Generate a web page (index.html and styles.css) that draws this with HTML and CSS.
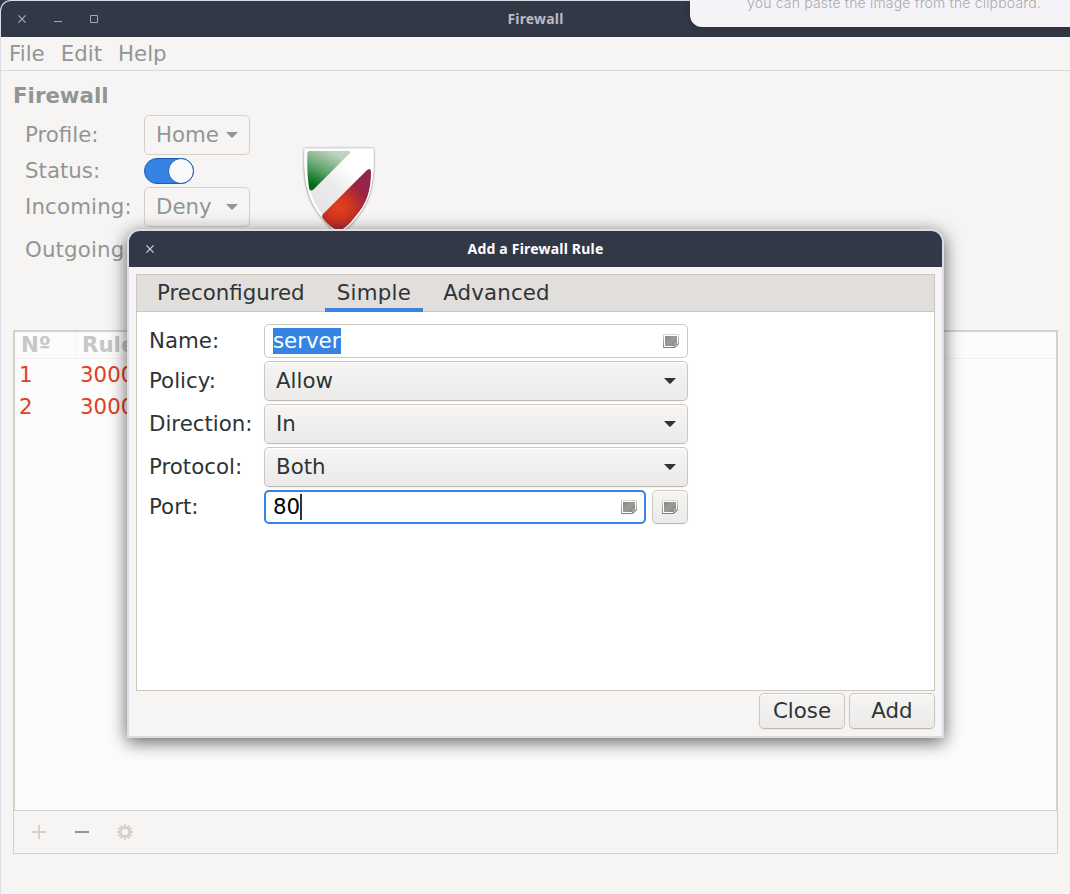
FILE: index.html
```html
<!DOCTYPE html>
<html lang="en">
<head>
<meta charset="utf-8">
<title>Firewall</title>
<link rel="stylesheet" href="styles.css">
</head>
<body>
<svg class="defs" width="0" height="0" aria-hidden="true">
  <defs>
    <linearGradient id="note" x1="0" y1="0" x2="1" y2="1"><stop offset="0" stop-color="#858883"/><stop offset=".5" stop-color="#999c97"/><stop offset="1" stop-color="#80837e"/></linearGradient>
    <linearGradient id="rim" x1="0" y1="0" x2="0" y2="1"><stop offset="0" stop-color="#d5d6d4"/><stop offset="1" stop-color="#7c7f7a"/></linearGradient>
    <symbol id="picture" viewBox="0 0 16 14">
      <path d="M.5.5h15v9.500l-3.500 3.500H.5z" fill="#fff" stroke="url(#rim)"/>
      <path d="M2 2h12v7.500h-3v2.500H2z" fill="url(#note)"/>
      <path d="M11.500 13V9.500l1.300.8 2.200-.300-3 3z" fill="#c8cac6" stroke="#7f827d" stroke-width=".8"/>
    </symbol>
    <symbol id="arrow" viewBox="0 0 12 6"><path d="M0 0h12L6.700 5.500q-.7.600-1.400 0z" fill="currentColor"/></symbol>
    <symbol id="cross" viewBox="0 0 8 8"><path d="M.4.400l7.200 7.200M7.600.400L.4 7.600" stroke="currentColor" stroke-width="1.200"/></symbol>
  </defs>
</svg>
<div class="window">
  <header class="titlebar">
    <div class="controls">
      <svg width="8" height="8"><use href="#cross"/></svg>
      <svg width="8" height="8"><path d="M0 6.500h8" stroke="currentColor"/></svg>
      <svg width="8" height="8"><path d="M.5.5h7v7h-7z" fill="none" stroke="currentColor"/></svg>
    </div>
    <span>Firewall</span>
  </header>
  <nav class="menubar"><span>File</span><span>Edit</span><span>Help</span></nav>
  <main class="content">
    <h1 class="heading">Firewall</h1>
    <section class="overview">
      <div class="form">
        <span>Profile:</span><div class="select muted"><span>Home</span><svg width="12" height="6"><use href="#arrow"/></svg></div>
        <span>Status:</span><div class="switch"><i></i></div>
        <span class="wide">Incoming:</span><div class="select muted"><span>Deny</span><svg width="12" height="6"><use href="#arrow"/></svg></div>
        <span class="wide">Outgoing:</span><div class="select muted"><span>Allow</span><svg width="12" height="6"><use href="#arrow"/></svg></div>
      </div>
      <svg class="shield" width="76" height="92" viewBox="0 0 76 92">
        <defs>
          <linearGradient id="silver" gradientUnits="userSpaceOnUse" x1="10" y1="70" x2="66" y2="8"><stop offset="0" stop-color="#e2e2e2"/><stop offset=".45" stop-color="#ebebeb"/><stop offset=".75" stop-color="#fff"/></linearGradient>
          <linearGradient id="green" gradientUnits="userSpaceOnUse" x1="28" y1="4" x2="9" y2="44"><stop offset="0" stop-color="#bdd2c0"/><stop offset=".45" stop-color="#5fa56b"/><stop offset=".85" stop-color="#006c16"/></linearGradient>
          <radialGradient id="red" gradientUnits="userSpaceOnUse" cx="38" cy="61" r="36"><stop offset="0" stop-color="#e5401c"/><stop offset=".35" stop-color="#cf361f"/><stop offset=".75" stop-color="#9c2441"/><stop offset="1" stop-color="#93244b"/></radialGradient>
        </defs>
        <path class="plate" d="M3.500 1.500h69c1 30-1 50-16.500 69Q47.500 82 38 87.500 29 82 21 71C4 51 2 29 3.500 1.500z" fill="url(#silver)"/>
        <path d="M4.500 2.500h67c1 28-1.500 48-16.500 67Q46.500 80 38 86 30 80 22 70C6 51 3.600 29 4.500 2.500z" fill="none" stroke="#fff" stroke-width="2"/>
        <path d="M9 4H46.500q4.500 0 2 2.600L13 42q-4 3.500-5-1-2.200-16-1.600-34Q6.500 4 9 4z" fill="url(#green)"/>
        <path d="M70 24.500C70 44 65.500 57 54 70Q46.500 80 38 84 28 80 22 71.500q-2-2.500.3-4.800L65 24q4.500-4 5 .5z" fill="url(#red)"/>
      </svg>
    </section>
    <section class="rules">
      <div class="table">
        <div class="row head"><b>Nº</b><b>Rule</b></div>
        <div class="row"><span>1</span><span>3000</span></div>
        <div class="row"><span>2</span><span>3000</span></div>
      </div>
      <div class="toolbar">
        <svg width="14" height="14"><path d="M7 0v14M0 7h14" stroke="#d5d0cc" stroke-width="2"/></svg>
        <svg width="14" height="14"><path d="M0 7h14" stroke="#929595" stroke-width="2"/></svg>
        <svg class="gear" width="16" height="16" viewBox="-8 -8 16 16" fill="none" stroke="#d5d0cc"><circle r="4.600" stroke-width="3"/><path d="M0-8v3M0 8V5M-8 0h3M8 0H5M-4.700-6.500l1.500 2M4.700-6.500l-1.500 2M-4.700 6.500l1.500-2M4.700 6.500l-1.500-2M-6.800-4l2 1.200M6.800-4l-2 1.200M-6.800 4l2-1.200M6.800 4l-2-1.200" stroke-width="1.800"/></svg>
      </div>
    </section>
  </main>
</div>

<aside class="notice">you can paste the image from the clipboard.</aside>

<div class="dialog" role="dialog">
  <header class="titlebar">
    <div class="controls"><svg width="8" height="8"><use href="#cross"/></svg></div>
    <span>Add a Firewall Rule</span>
  </header>
  <div class="notebook">
    <div class="tabs"><span>Preconfigured</span><span class="active">Simple</span><span class="last">Advanced</span></div>
    <div class="form">
      <span>Name:</span><div class="entry"><mark>server</mark><svg width="16" height="14"><use href="#picture"/></svg></div>
      <span>Policy:</span><div class="select"><span>Allow</span><svg width="12" height="6"><use href="#arrow"/></svg></div>
      <span>Direction:</span><div class="select"><span>In</span><svg width="12" height="6"><use href="#arrow"/></svg></div>
      <span>Protocol:</span><div class="select"><span>Both</span><svg width="12" height="6"><use href="#arrow"/></svg></div>
      <span>Port:</span>
      <div class="port">
        <div class="entry focus"><span class="typed">80</span><svg width="16" height="14"><use href="#picture"/></svg></div>
        <div class="button square"><svg width="16" height="14"><use href="#picture"/></svg></div>
      </div>
    </div>
  </div>
  <footer class="actions"><div class="button">Close</div><div class="button">Add</div></footer>
</div>
</body>
</html>
```
FILE: styles.css
```css
* { box-sizing: border-box; }
body {
  margin: 0;
  position: relative;
  width: 1070px;
  height: 894px;
  overflow: hidden;
  background: #323846;
  font: 21.33px/26px "DejaVu Sans", sans-serif;
  color: #929595;
}
svg { display: block; flex: none; }
.defs { position: absolute; }

.window {
  height: 894px;
  border: solid #dadde6;
  border-width: 1px 0 0 1px;
  border-radius: 11px 0 0 0;
  background: #f6f5f3;
  overflow: hidden;
}
.titlebar {
  display: grid;
  grid-template-columns: 1fr auto 1fr;
  align-items: center;
  height: 36px;
  background: #323846;
  color: #b9bcc2;
  font: bold 14px/20px "Noto Sans", sans-serif;
  letter-spacing: .2px;
}
.controls { display: flex; gap: 28px; padding-left: 17px; color: #a4a8b0; }
.menubar {
  display: flex;
  gap: 16px;
  height: 34px;
  padding: 4px 8px 0;
  border-bottom: 1px solid #dcdad8;
}
.content { padding: 12px; }
.heading { margin: 0 0 6px; font-size: 21.33px; line-height: 26px; }
.overview { display: flex; height: 215px; }
.form { display: grid; row-gap: 3px; align-content: start; align-items: center; }
.overview .form { grid-template-columns: 107px 106px; column-gap: 12px; padding-left: 12px; }
.wide { letter-spacing: .15px; }
.shield { margin: 32px 0 0 51px; overflow: visible; }
.plate { filter: drop-shadow(0 .5px 1.2px #00000090); }

.select {
  display: flex;
  align-items: center;
  justify-content: space-between;
  height: 40px;
  padding: 0 11px;
  border: 1px solid #cdc7c2;
  border-bottom-color: #bfb8b1;
  border-radius: 5px;
  background: linear-gradient(#f6f5f4, #ebeae8);
  box-shadow: inset 0 1px #fff, 0 1px 2px #0000000d;
}
.select.muted { border-color: #d4d0cc; background: none; box-shadow: none; }
.switch {
  width: 50px;
  height: 26px;
  border: 1px solid #185fb4;
  border-radius: 13px;
  background: #3584e4;
  display: flex;
  justify-content: flex-end;
}
.switch i {
  width: 26px;
  height: 26px;
  margin: -1px;
  border: 1px solid #185fb4;
  border-radius: 50%;
  background: #fafafa;
}

.rules { height: 524px; border: 1px solid #d5d0cc; }
.table {
  height: 480px;
  border: 1px solid #d5d0cc;
  background: #fcfcfc;
  color: #e0401f;
}
.row { display: grid; grid-template-columns: 61px 1fr; height: 32px; padding-top: 3px; }
.row > * { padding-left: 4px; }
.row.head { height: 27px; padding: 0; border-bottom: 1px solid #f3f2f1; color: #c6c7c7; }
.row.head b { padding-left: 6px; line-height: 25px; }
.row.head b:first-child { border-right: 1px solid #f3f2f1; }
.toolbar { display: flex; align-items: center; gap: 29px; height: 42px; padding-left: 18px; }
.gear { margin-left: -1px; }

.notice {
  position: absolute;
  top: 0;
  right: 0;
  width: 380px;
  height: 27px;
  padding-left: 57px;
  border-radius: 0 0 0 12px;
  background: #f4f3f8;
  box-shadow: 0 2px 6px #2a2a2a80;
  font: 300 14px/5px Inter, sans-serif;
  letter-spacing: .17px;
  color: #a9a9ae;
  white-space: nowrap;
}

.dialog {
  position: absolute;
  left: 127px;
  top: 229px;
  width: 817px;
  height: 509px;
  border: 2px solid #dadde6;
  border-radius: 13px 13px 0 0;
  background: #f6f5f3;
  box-shadow: 0 4px 18px 0 #000000a0;
  color: #2e3436;
}
.dialog .titlebar { border-radius: 11px 11px 0 0; color: #fff; }
.dialog .controls { color: #d3d5da; }
.notebook {
  height: 417px;
  margin: 7px 7px 2px;
  border: 1px solid #cdc7c2;
  background: #fff;
}
.tabs {
  display: flex;
  gap: 8px;
  height: 37px;
  padding-left: 8px;
  border-bottom: 1px solid #cdc7c2;
  background: #e1dedb;
}
.tabs span { height: 37px; padding: 5px 12px 0; }
.tabs .active { border-bottom: 4px solid #3584e4; letter-spacing: .28px; }
.tabs .last { letter-spacing: .15px; }
.notebook .form { grid-template-columns: 103px 424px; column-gap: 12px; padding: 12px; }
.entry {
  display: flex;
  align-items: center;
  justify-content: space-between;
  height: 34px;
  padding: 0 8px;
  border: 1px solid #cdc7c2;
  border-radius: 5px;
  background: #fff;
}
mark { background: #3584e4; color: #fff; }
.port { display: flex; gap: 6px; }
.port .entry { flex: 1; }
.entry.focus { padding: 0 7px; border: 2px solid #3584e4; color: #000; }
.typed { border-right: 2px solid #2e3436; }
.button {
  display: flex;
  align-items: center;
  justify-content: center;
  width: 86px;
  height: 36px;
  border: 1px solid #cdc7c2;
  border-bottom-color: #bfb8b1;
  border-radius: 5px;
  background: linear-gradient(#f6f5f4, #ebeae8);
  box-shadow: inset 0 1px #fff, 0 1px 2px #0000000d;
}
.button.square { width: 36px; height: 34px; }
.actions { display: flex; justify-content: flex-end; gap: 4px; padding-right: 7px; }
```
